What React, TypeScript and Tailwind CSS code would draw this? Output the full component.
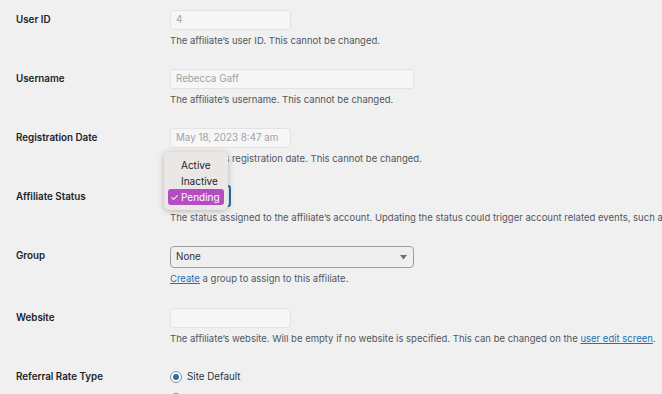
import React from "react";

const font = { fontFamily: "Inter, 'Noto Sans', sans-serif" };

function Row({
  label,
  children,
  gap = "mb-[21px]",
}: {
  label: string;
  children: React.ReactNode;
  gap?: string;
}) {
  return (
    <div className={`flex items-start ${gap}`}>
      <div className="w-[170px] shrink-0 pl-4 text-[9.8px] font-semibold leading-[20px] text-[#1d2327]">
        {label}
      </div>
      <div className="min-w-0">{children}</div>
    </div>
  );
}

function Desc({ children }: { children: React.ReactNode }) {
  return (
    <p className="mt-[4px] whitespace-nowrap text-[9.5px] leading-[14px] text-[#50575e]">
      {children}
    </p>
  );
}

function ReadOnly({ value, w }: { value: string; w: string }) {
  return (
    <div
      className={`${w} h-[20px] whitespace-nowrap rounded-[3px] border border-[#e2e2e4] bg-[#f6f6f6] px-[5px] text-[9.8px] leading-[18px] text-[#a0a3a6]`}
    >
      {value}
    </div>
  );
}

export default function App() {
  return (
    <div
      className="h-[394px] w-[662px] overflow-hidden bg-[#f0f0f1] pt-[10px]"
      style={font}
    >
      <Row label="User ID">
        <ReadOnly value="4" w="w-[121px]" />
        <Desc>The affiliate’s user ID. This cannot be changed.</Desc>
      </Row>

      <Row label="Username">
        <ReadOnly value="Rebecca Gaff" w="w-[244px]" />
        <Desc>The affiliate’s username. This cannot be changed.</Desc>
      </Row>

      <Row label="Registration Date">
        <ReadOnly value="May 18, 2023 8:47 am" w="w-[121px]" />
        <Desc>The affiliate’s registration date. This cannot be changed.</Desc>
      </Row>

      <Row label="Affiliate Status">
        <div className="relative h-[20px]">
          <div className="absolute left-0 top-[-2px] h-[22px] w-[61px] rounded-[3px] border-2 border-[#2271b1] bg-[#f0f0f1]" />
          <div className="absolute left-[-6px] top-[-35px] w-[64px] rounded-[5px] bg-[#ebe7e5] px-[4px] py-[5px] text-[10px] leading-[16px] text-[#1d2327] shadow-[0_1px_6px_rgba(0,0,0,0.25)]">
            <div className="pl-[13px]">Active</div>
            <div className="pl-[13px]">Inactive</div>
            <div className="flex items-center rounded-[3px] bg-[#b64cc4] pl-[2px] text-white">
              <span className="w-[11px] text-[10px] leading-[16px]">✓</span>
              Pending
            </div>
          </div>
        </div>
        <Desc>
          The status assigned to the affiliate’s account. Updating the status
          could trigger account related events, such as email notifications.
        </Desc>
      </Row>

      <Row label="Group" gap="mb-[22px]">
        <div className="flex h-[22px] w-[244px] items-center justify-between rounded-[4px] border border-[#9a9ca0] bg-[#efefef] pl-[5px] pr-[6px] text-[9.8px] text-[#2c3338]">
          <span>None</span>
          <svg width="7" height="5" viewBox="0 0 7 5">
            <path d="M0 0h7L3.5 4.5z" fill="#6b6f73" />
          </svg>
        </div>
        <p className="mt-[4px] whitespace-nowrap text-[9.5px] leading-[14px] text-[#50575e]">
          <a href="#" className="text-[#2271b1] underline">
            Create
          </a>{" "}
          a group to assign to this affiliate.
        </p>
      </Row>

      <Row label="Website">
        <ReadOnly value="" w="w-[121px]" />
        <Desc>
          The affiliate’s website. Will be empty if no website is specified.
          This can be changed on the{" "}
          <a href="#" className="text-[#2271b1] underline">
            user edit screen
          </a>
          .
        </Desc>
      </Row>

      <Row label="Referral Rate Type">
        <div className="flex flex-col gap-[2px] text-[9.8px] leading-[20px] text-[#2c3338]">
          <label className="flex items-center gap-[5px]">
            <span className="flex h-[12px] w-[12px] items-center justify-center rounded-full border border-[#8c8f94] bg-white">
              <span className="h-[6px] w-[6px] rounded-full bg-[#2271b1]" />
            </span>
            Site Default
          </label>
          <label className="flex items-center gap-[5px]">
            <span className="h-[12px] w-[12px] rounded-full border border-[#8c8f94] bg-white" />
            Percentage (%)
          </label>
        </div>
      </Row>
    </div>
  );
}
